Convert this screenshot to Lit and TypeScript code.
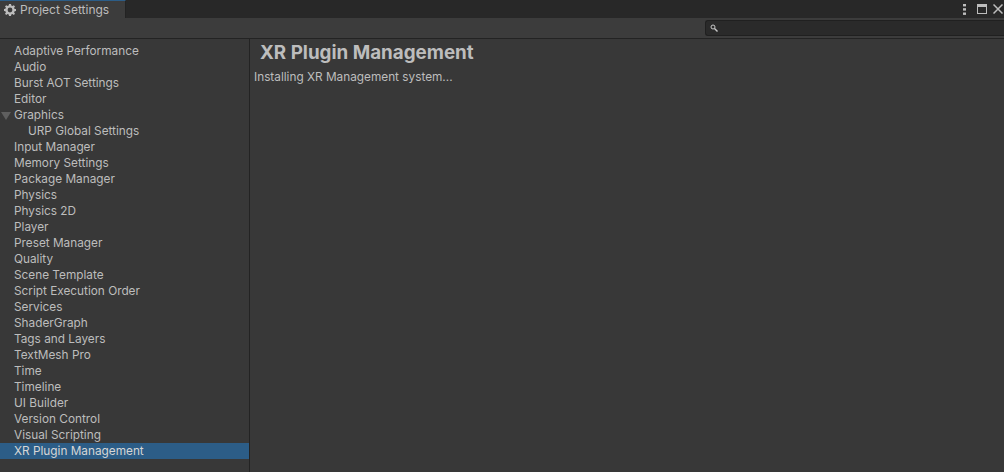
import { LitElement, html, css } from 'lit';
import { customElement } from 'lit/decorators.js';

// name + indent level of each settings entry
const ITEMS: { label: string; child?: boolean; open?: boolean; selected?: boolean }[] = [
  { label: 'Adaptive Performance' },
  { label: 'Audio' },
  { label: 'Burst AOT Settings' },
  { label: 'Editor' },
  { label: 'Graphics', open: true },
  { label: 'URP Global Settings', child: true },
  { label: 'Input Manager' },
  { label: 'Memory Settings' },
  { label: 'Package Manager' },
  { label: 'Physics' },
  { label: 'Physics 2D' },
  { label: 'Player' },
  { label: 'Preset Manager' },
  { label: 'Quality' },
  { label: 'Scene Template' },
  { label: 'Script Execution Order' },
  { label: 'Services' },
  { label: 'ShaderGraph' },
  { label: 'Tags and Layers' },
  { label: 'TextMesh Pro' },
  { label: 'Time' },
  { label: 'Timeline' },
  { label: 'UI Builder' },
  { label: 'Version Control' },
  { label: 'Visual Scripting' },
  { label: 'XR Plugin Management', selected: true },
];

@customElement('app-root')
export class AppRoot extends LitElement {
  static styles = css`
    :host {
      display: flex;
      flex-direction: column;
      width: 1004px;
      height: 472px;
      overflow: hidden;
      background: #383838;
      color: #bdbdbd;
      font-family: Inter, "Liberation Sans", sans-serif;
      font-size: 11.8px;
    }
    .tabbar {
      display: flex;
      height: 18px;
      flex: none;
      background: #282828;
    }
    .tab {
      display: flex;
      align-items: center;
      gap: 4px;
      padding-left: 4px;
      background: #3c3c3c;
      border-top: 1px solid #2c5d87;
      border-right: 1px solid #232323;
      box-sizing: border-box;
      margin-right: auto;
      line-height: 17px;
      width: 126px;
      font-size: 12px;
    }
    .tab svg { flex: none; }
    .winbtns {
      display: flex;
      align-items: center;
      gap: 6px;
      padding-right: 1px;
    }
    .toolbar {
      display: flex;
      justify-content: flex-end;
      align-items: center;
      flex: none;
      height: 21px;
      box-sizing: border-box;
      background: #3c3c3c;
      border-bottom: 1px solid #232323;
    }
    .search {
      display: flex;
      align-items: center;
      width: 299px;
      height: 16px;
      box-sizing: border-box;
      padding-left: 4px;
      background: #2a2a2a;
      border: 1px solid #202020;
      border-right: none;
      border-radius: 3px 0 0 3px;
    }
    .body {
      display: flex;
      flex: 1;
      min-height: 0;
    }
    .side {
      width: 249px;
      flex: none;
      padding-top: 4px;
      border-right: 1px solid #232323;
    }
    .row {
      position: relative;
      height: 16px;
      line-height: 16px;
      padding-left: 14px;
      white-space: nowrap;
    }
    .row.child { padding-left: 28px; }
    .row.selected {
      background: #2c5d87;
      color: #d6d6d6;
    }
    .arrow {
      position: absolute;
      left: 1px;
      top: 5px;
      width: 0;
      height: 0;
      border-left: 5px solid transparent;
      border-right: 5px solid transparent;
      border-top: 8px solid #5f5f5f;
    }
    .main {
      flex: 1;
      padding-left: 4px;
    }
    h1 {
      margin: 0;
      padding: 2px 0 0 6px;
      height: 24px;
      font-size: 18.8px;
      line-height: 24px;
      font-weight: 700;
      color: #bdbdbd;
    }
    .status {
      margin-top: 4px;
      line-height: 16px;
    }
    .kebab { margin-right: 5px; }
  `;

  render() {
    return html`
      <div class="tabbar">
        <div class="tab">
          <svg width="12" height="12" viewBox="0 0 12 12" fill="#bdbdbd">
            <path fill-rule="evenodd" d="M5 0h2l.3 1.6 1.1.5L9.8 1.2l1.2 1.2-.9 1.4.5 1.1L12 5v2l-1.4.3-.5 1.1.9 1.4-1.2 1.2-1.4-.9-1.1.5L7 12H5l-.3-1.4-1.1-.5-1.4.9L1 9.8l.9-1.4-.5-1.1L0 7V5l1.4-.3.5-1.1L1 2.4l1.2-1.2 1.4.9 1.1-.5L5 0zm1 3.6a2.4 2.4 0 1 0 0 4.8 2.4 2.4 0 0 0 0-4.8z"/>
          </svg>
          <span>Project Settings</span>
        </div>
        <div class="winbtns">
          <svg class="kebab" width="3" height="11" viewBox="0 0 3 11" fill="#bdbdbd">
            <rect x="0" y="0" width="3" height="2.4"/><rect x="0" y="4.2" width="3" height="2.4"/><rect x="0" y="8.5" width="3" height="2.4"/>
          </svg>
          <svg width="10" height="10" viewBox="0 0 10 10" fill="none" stroke="#bdbdbd">
            <rect x=".5" y=".5" width="9" height="9"/><path d="M0 2h10" stroke-width="2"/>
          </svg>
          <svg width="10" height="10" viewBox="0 0 10 10" fill="none" stroke="#bdbdbd" stroke-width="1.5">
            <path d="M.5.5l9 9M9.5.5l-9 9"/>
          </svg>
        </div>
      </div>
      <div class="toolbar">
        <div class="search">
          <svg width="8" height="8" viewBox="0 0 8 8" fill="none" stroke="#c8c8c8">
            <circle cx="3" cy="3" r="2"/><path d="M4.5 4.5L7.5 7.5" stroke-width="1.4"/>
          </svg>
        </div>
      </div>
      <div class="body">
        <div class="side">
          ${ITEMS.map(
            (it) => html`
              <div class="row ${it.child ? 'child' : ''} ${it.selected ? 'selected' : ''}">
                ${it.open ? html`<span class="arrow"></span>` : ''}${it.label}
              </div>
            `
          )}
        </div>
        <div class="main">
          <h1>XR Plugin Management</h1>
          <div class="status">Installing XR Management system...</div>
        </div>
      </div>
    `;
  }
}
